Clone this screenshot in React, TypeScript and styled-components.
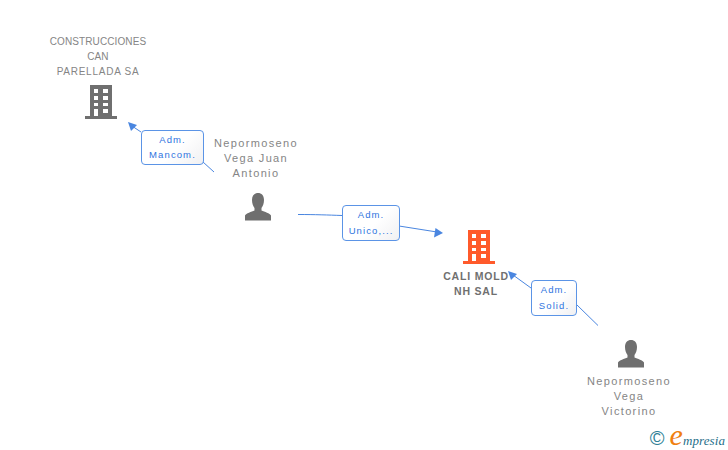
import styled, { createGlobalStyle } from "styled-components"

const GlobalStyle = createGlobalStyle`
    html, body {
        margin: 0;
        padding: 0;
        background: #fff;
    }
`

function Building({ color }: { color: string }) {
    return (
        <svg width="32" height="34" viewBox="0 0 32 34">
            <path
                fill={color}
                fillRule="evenodd"
                d="M5 0H27V31H32V34H0V31H5ZM9 4V8H13V4ZM18 4V8H23V4ZM9 11V15H13V11ZM18 11V15H23V11ZM9 18V21H13V18ZM18 18V21H23V18ZM9 24V31H13V24ZM18 24V28H23V24Z"
            />
        </svg>
    )
}

function Person() {
    return (
        <svg width="28" height="28" viewBox="0 0 28 28">
            <path
                fill="#6f6f6f"
                d="M14 0C17.500 0 20 2.500 20 7C20 10.500 18.800 13.500 17.500 15V17.500C20.500 19 26 20 27 22.500V27.500H1V22.500C2 20 7.500 19 10.500 17.500V15C9.200 13.500 8 10.500 8 7C8 2.500 10.500 0 14 0Z"
            />
        </svg>
    )
}

function Connectors() {
    const blue = "#4a86e0"
    return (
        <Lines width="728" height="450" viewBox="0 0 728 450">
            <g fill="none" stroke={blue} strokeWidth="1">
                <path d="M214 172L203 162" />
                <path d="M141 132L132 126" />
                <path d="M298 214.500C315 214.500 328 215 342 215.500" />
                <path d="M399 226L437 232" />
                <path d="M598 325.500L577 305" />
                <path d="M531 288L513 275" />
            </g>
            <g fill={blue}>
                <path d="M128 122L137 125L131 131Z" />
                <path d="M443 233L434 237.500L435.500 228Z" />
                <path d="M508 271L517 274L511 280Z" />
            </g>
        </Lines>
    )
}

export default function App() {
    return (
        <>
            <GlobalStyle />
            <Canvas>
                <Connectors />

                <Node $x={98} $y={34}>
                    <Name>CONSTRUCCIONES<br />CAN<br /><WideLine>PARELLADA SA</WideLine></Name>
                    <IconSlot $top={6} $shift={3}><Building color="#6f6f6f" /></IconSlot>
                </Node>

                <Node $x={256} $y={136}>
                    <PersonName>Nepormoseno<br />Vega Juan<br />Antonio</PersonName>
                    <IconSlot $top={12} $shift={2}><Person /></IconSlot>
                </Node>

                <Node $x={476} $y={230}>
                    <IconSlot $top={0} $shift={2.5}><Building color="#ff5a2b" /></IconSlot>
                    <MainName>CALI MOLD<br />NH SAL</MainName>
                </Node>

                <Node $x={629} $y={340}>
                    <IconSlot $top={0} $shift={2}><Person /></IconSlot>
                    <CaptionName>Nepormoseno<br />Vega<br />Victorino</CaptionName>
                </Node>

                <EdgeLabel $x={141} $y={130} $w={63} $h={35}>Adm.<br />Mancom.</EdgeLabel>
                <EdgeLabel $x={342} $y={205} $w={58} $h={36}>Adm.<br />Unico,...</EdgeLabel>
                <EdgeLabel $x={531} $y={280} $w={46} $h={36}>Adm.<br />Solid.</EdgeLabel>

                <Brand>
                    <Copy>©</Copy>
                    <Logo><LogoE>e</LogoE>mpresia</Logo>
                </Brand>
            </Canvas>
        </>
    )
}

const Canvas = styled.div`
    position: relative;
    width: 728px;
    height: 450px;
    overflow: hidden;
    background: #fff;
    font-family: "Liberation Sans", Arial, sans-serif;
`
const Lines = styled.svg`
    position: absolute;
    left: 0;
    top: 0;
`
const Node = styled.div<{ $x: number; $y: number }>`
    position: absolute;
    left: ${(p) => p.$x - 70}px;
    top: ${(p) => p.$y}px;
    width: 140px;
    display: flex;
    flex-direction: column;
    align-items: center;
`
const IconSlot = styled.div<{ $top: number; $shift: number }>`
    display: flex;
    margin-top: ${(p) => p.$top}px;
    margin-left: ${(p) => p.$shift * 2}px;
`
const Name = styled.div`
    font-size: 10px;
    line-height: 15px;
    letter-spacing: 0.1px;
    color: #858585;
    text-align: center;
`
const WideLine = styled.span`
    letter-spacing: 0.75px;
`
const PersonName = styled(Name)`
    font-size: 11px;
    letter-spacing: 1.35px;
`
const CaptionName = styled(PersonName)`
    margin-top: 6px;
`
const MainName = styled(Name)`
    margin-top: 5px;
    font-size: 10.5px;
    font-weight: 700;
    color: #707070;
    letter-spacing: 0.8px;
`
const EdgeLabel = styled.div<{ $x: number; $y: number; $w: number; $h: number }>`
    position: absolute;
    left: ${(p) => p.$x}px;
    top: ${(p) => p.$y}px;
    width: ${(p) => p.$w}px;
    height: ${(p) => p.$h}px;
    box-sizing: border-box;
    border: 1px solid #5b94e6;
    border-radius: 4px;
    background: linear-gradient(135deg, #ffffff 55%, #f0f0f2);
    color: #2f74e0;
    font-size: 9.5px;
    line-height: ${(p) => p.$h - 20}px;
    letter-spacing: 1.1px;
    text-align: center;
    padding-top: 1px;
`
const Brand = styled.div`
    position: absolute;
    right: 3px;
    top: 420px;
    height: 30px;
    display: flex;
    align-items: baseline;
    gap: 5px;
`
const Copy = styled.span`
    font-size: 20px;
    line-height: 30px;
    color: #2f7f96;
`
const Logo = styled.span`
    display: flex;
    align-items: baseline;
    font-family: "Liberation Serif", serif;
    font-style: italic;
    font-size: 13px;
    line-height: 30px;
    letter-spacing: 0.1px;
    color: #1f6f8a;
`
const LogoE = styled.span`
    font-size: 30px;
    line-height: 30px;
    letter-spacing: 0;
    color: #f08010;
`
